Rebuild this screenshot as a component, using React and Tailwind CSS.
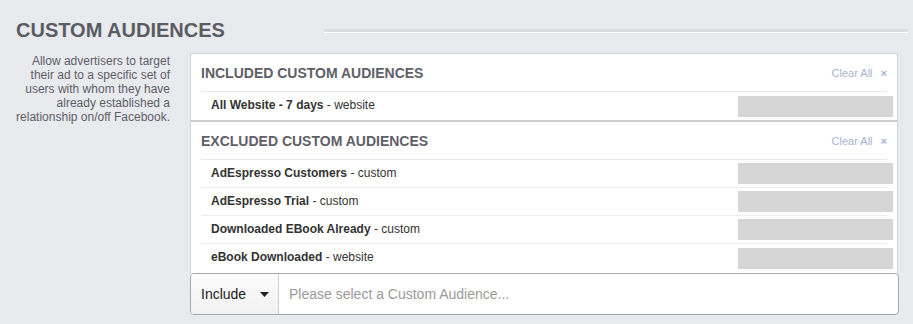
import React from 'react';

const included = [{ name: 'All Website - 7 days', type: 'website' }];

const excluded = [
    { name: 'AdEspresso Customers', type: 'custom' },
    { name: 'AdEspresso Trial', type: 'custom' },
    { name: 'Downloaded EBook Already', type: 'custom' },
    { name: 'eBook Downloaded', type: 'website' },
];

const SectionHeader = ({ title }) => (
    <div className="mx-[10px] h-[38px] flex items-center justify-between border-b border-[#e8e8e8] pt-[2px]">
        <span className="text-[14px] font-bold text-[#5f6068]">{title}</span>
        <span className="flex items-center text-[11px] text-[#a8b3d2]">
            Clear All
            <span className="ml-[8px] text-[11px] font-bold leading-none">×</span>
        </span>
    </div>
);

const AudienceRow = ({ item, last }) => (
    <div className={`h-[28px] flex items-center justify-between ${last ? '' : 'border-b border-[#ececec]'}`}>
        <span className="pl-[10px] pb-[2px] text-[12px] text-[#333]">
            <b>{item.name}</b> - {item.type}
        </span>
        <div className="w-[155px] h-[21px] mr-[-6px] bg-[#d6d6d6]" />
    </div>
);

export default function App() {
    return (
        <div className="w-[913px] h-[324px] bg-[#e9eaee] overflow-hidden font-[family-name:'Liberation_Sans',Arial,sans-serif]">
            {/* page title with rule */}
            <div className="flex items-center h-[24px] mt-[18px] pl-[16px]">
                <h1 className="w-[308px] text-[20px] font-bold text-[#595c63] leading-[24px]">CUSTOM AUDIENCES</h1>
                <div className="flex-1 mr-[5px] mt-[1px] h-[4px] border-t-[3px] border-[#dcdde1] bg-white" />
            </div>

            <div className="flex mt-[11px]">
                <p className="w-[190px] pl-[12px] pr-[20px] pt-[1px] text-right text-[12px] leading-[14px] text-[#5d6068]">
                    Allow advertisers to target their ad to a specific set of users with whom they have already established a relationship on/off Facebook.
                </p>

                <div className="flex flex-col">
                    <div className="w-[708px] bg-white border border-[#d2d3d6] border-b-0">
                        <SectionHeader title="INCLUDED CUSTOM AUDIENCES" />
                        <div className="mx-[10px]">
                            {included.map((item, i) => (
                                <AudienceRow key={item.name} item={item} last={i === included.length - 1} />
                            ))}
                        </div>
                        <div className="h-[2px] bg-[#cfcfcf]" />
                        <SectionHeader title="EXCLUDED CUSTOM AUDIENCES" />
                        <div className="mx-[10px]">
                            {excluded.map((item, i) => (
                                <AudienceRow key={item.name} item={item} last={i === excluded.length - 1} />
                            ))}
                        </div>
                        <div className="h-[1px]" />
                    </div>

                    {/* include / exclude picker */}
                    <div className="w-[709px] h-[42px] flex bg-white border border-[#a3a7ae] rounded-[4px] overflow-hidden">
                        <div className="w-[88px] flex items-center pl-[10px] border-r border-[#cdcfd3] bg-gradient-to-b from-[#fcfcfc] to-[#f1f1f1]">
                            <span className="text-[14px] text-[#222]">Include</span>
                            <svg className="ml-[14px]" width="9" height="5" viewBox="0 0 9 5">
                                <path d="M0 0 L9 0 L4.5 5 Z" fill="#222" />
                            </svg>
                        </div>
                        <div className="flex-1 flex items-center pl-[10px] text-[14px] text-[#9a9a9a]">
                            Please select a Custom Audience...
                        </div>
                    </div>
                </div>
            </div>
        </div>
    );
}
